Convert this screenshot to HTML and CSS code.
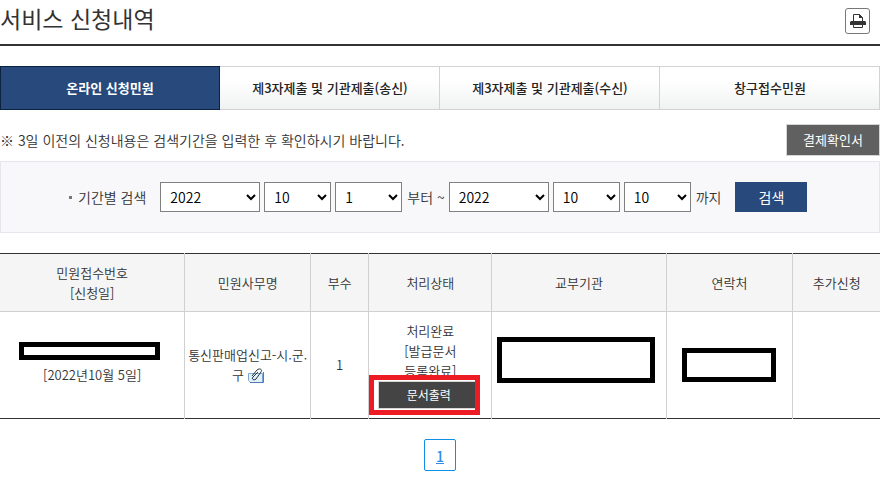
FILE: index.html
```html
<!DOCTYPE html>
<html lang="ko">
<head>
<meta charset="utf-8">
<title>서비스 신청내역</title>
<link rel="stylesheet" href="styles.css">
</head>
<body>
<main class="page">
  <header class="page-head">
    <h1>서비스 신청내역</h1>
    <button class="print" type="button" aria-label="인쇄">
      <svg width="16" height="14" viewBox="0 0 16 14" aria-hidden="true">
        <path d="M3.500 7V.5h6l3 3V7" fill="#fff" stroke="#333"/>
        <path d="M9 0v4h4z" fill="#333"/>
        <path d="M1 7h14l1 1v3H0V8z" fill="#333"/>
        <path d="M3.500 10.500h9v3h-9z" fill="#fff" stroke="#333"/>
      </svg>
    </button>
  </header>

  <nav class="tabs">
    <a class="tab active" href="#online">온라인 신청민원</a>
    <a class="tab" href="#sent">제3자제출 및 기관제출(송신)</a>
    <a class="tab" href="#received">제3자제출 및 기관제출(수신)</a>
    <a class="tab" href="#desk">창구접수민원</a>
  </nav>

  <div class="notice">
    <p>※ 3일 이전의 신청내용은 검색기간을 입력한 후 확인하시기 바랍니다.</p>
    <button class="receipt" type="button">결제확인서</button>
  </div>

  <form class="search">
    <label class="search-label" for="from-year">기간별 검색</label>
    <div class="dates">
      <select id="from-year" class="year"><option>2022</option></select>
      <select class="short" aria-label="시작 월"><option>10</option></select>
      <select class="short" aria-label="시작 일"><option>1</option></select>
    </div>
    <span class="word">부터 ~</span>
    <div class="dates">
      <select class="year" aria-label="종료 연도"><option>2022</option></select>
      <select class="short" aria-label="종료 월"><option>10</option></select>
      <select class="short" aria-label="종료 일"><option>10</option></select>
    </div>
    <span class="word">까지</span>
    <button class="submit" type="button">검색</button>
  </form>

  <table class="list">
    <colgroup>
      <col class="c-number"><col class="c-name"><col class="c-count"><col class="c-status"><col class="c-office"><col class="c-contact"><col>
    </colgroup>
    <thead>
      <tr>
        <th>민원접수번호<br>[신청일]</th>
        <th>민원사무명</th>
        <th>부수</th>
        <th>처리상태</th>
        <th>교부기관</th>
        <th>연락처</th>
        <th>추가신청</th>
      </tr>
    </thead>
    <tbody>
      <tr>
        <td><span class="mask mask-number"></span>[2022년10월 5일]</td>
        <td>통신판매업신고-시.군.<br>구
          <svg class="clip" width="16" height="16" viewBox="0 0 16 16" aria-hidden="true">
            <path d="M.5 5.500h14v9H2.500l-2-2z" fill="#e3f0fa" stroke="#7ba7d6"/>
            <path d="M2 14.500h13.500V4" fill="none" stroke="#4a7db5"/>
            <path d="M4 8l5-6c2-2 6-1 4 2L8 11c-2 2-5 0-3-2l5-5" fill="none" stroke="#223544"/>
          </svg>
        </td>
        <td>1</td>
        <td>처리완료<br>[발급문서<br>등록완료]
          <div class="print-doc"><button type="button">문서출력</button><span class="highlight"></span></div>
        </td>
        <td><span class="mask mask-office"></span></td>
        <td><span class="mask mask-contact"></span></td>
        <td></td>
      </tr>
    </tbody>
  </table>

  <nav class="pages"><a href="#page1">1</a></nav>
</main>
</body>
</html>
```
FILE: styles.css
```css
* { box-sizing: border-box; }
body {
  margin: 0;
  background: #fff;
  color: #333;
  font: 13px/20px "Noto Sans CJK KR", sans-serif;
  font-weight: 350;
}
button, select { font: inherit; border-radius: 0; }
button { padding: 0; }
.page { padding-right: 15px; }

.page-head {
  display: flex;
  justify-content: space-between;
  align-items: flex-start;
  height: 46px;
  padding: 3px 10px 0 0;
  border-bottom: 2px solid #333;
}
h1 { margin: 0; font-size: 23px; line-height: 30px; font-weight: 400; }
.print {
  display: flex;
  align-items: center;
  justify-content: center;
  width: 25px;
  height: 26px;
  margin-top: 5px;
  border: 1px solid #777;
  border-radius: 3px;
  background: #fff;
}

.tabs { display: flex; margin-top: 20px; }
.tab {
  flex: 1 1 0;
  min-width: 0;
  height: 44px;
  border: solid #d3d3d3;
  border-width: 1px 0;
  box-shadow: inset -1px 0 #d3d3d3;
  background: linear-gradient(#fff 30%, #f0f2f1);
  color: #222;
  font-weight: 500;
  line-height: 42px;
  text-align: center;
  text-decoration: none;
}
.tab.active {
  border-color: #0b2340;
  box-shadow: inset 1px 0 #0b2340, inset -1px 0 #0b2340;
  background: #28497c;
  color: #fff;
  font-weight: 700;
}

.notice {
  display: flex;
  justify-content: space-between;
  align-items: center;
  margin: 14px 0 5px;
}
.notice p { margin: 0; font-size: 14px; }
.receipt {
  width: 94px;
  height: 32px;
  border: 1px solid #d5d5d5;
  background: #606060;
  color: #fff;
  font-weight: 400;
}

.search {
  display: flex;
  align-items: center;
  height: 72px;
  padding-left: 68px;
  border: 1px solid #e6e7ec;
  background: #f8f8fb;
  font-size: 14px;
}
.search-label { display: flex; align-items: center; margin-right: 14px; }
.search-label::before {
  content: "";
  width: 3px;
  height: 3px;
  margin-right: 6px;
  background: #777;
}
.dates { display: flex; gap: 4px; }
select {
  height: 30px;
  padding: 0 0 0 5px;
  border: 1px solid #808080;
  background: #fff;
  color: #000;
}
.year { width: 100px; }
.short { width: 67px; }
.word { margin: 0 4px 0 5px; }
.submit {
  width: 72px;
  height: 30px;
  margin-left: 10px;
  border: 0;
  background: #28497c;
  color: #fff;
  font-weight: 400;
}

.list {
  width: 100%;
  margin-top: 20px;
  border-collapse: collapse;
  table-layout: fixed;
  border-top: 1px solid #333;
  border-bottom: 1px solid #333;
  text-align: center;
}
.c-number { width: 21%; }
.c-name { width: 14.3%; }
.c-count { width: 6.6%; }
.c-status { width: 14%; }
.c-office { width: 19.8%; }
.c-contact { width: 14.4%; }
th, td { padding: 0; border-left: 1px solid #d0d0d0; }
th:first-child, td:first-child { border-left: 0; }
th {
  height: 58px;
  border-bottom: 1px solid #d0d0d0;
  background: #f5f5f5;
  font-weight: inherit;
}
td { height: 107px; }
td:first-child { padding-bottom: 4px; }
.mask { display: block; margin: 0 auto; border: 5px solid #000; background: #fff; }
.mask-number { width: 141px; height: 18px; margin: 0 0 5px 19px; }
.mask-office { width: 158px; height: 46px; margin: 0 0 10px 5px; }
.mask-contact { width: 94px; height: 34px; }
.clip { vertical-align: middle; }
.print-doc { position: relative; height: 28px; padding: 0 12px 0 9px; }
.print-doc button {
  width: 100%;
  height: 28px;
  border: 1px solid #d5d5d5;
  background: #444;
  color: #fff;
  font-size: 12px;
  font-weight: 400;
}
.highlight {
  position: absolute;
  inset: -6px 11px -6px 0;
  border: 5px solid #ed1c24;
}

.pages { display: flex; justify-content: center; margin-top: 20px; }
.pages a {
  width: 32px;
  height: 32px;
  border: 1px solid #0f90e6;
  border-radius: 2px;
  color: #2f8ae8;
  font-size: 14px;
  font-weight: 500;
  line-height: 32px;
  text-align: center;
}
```
